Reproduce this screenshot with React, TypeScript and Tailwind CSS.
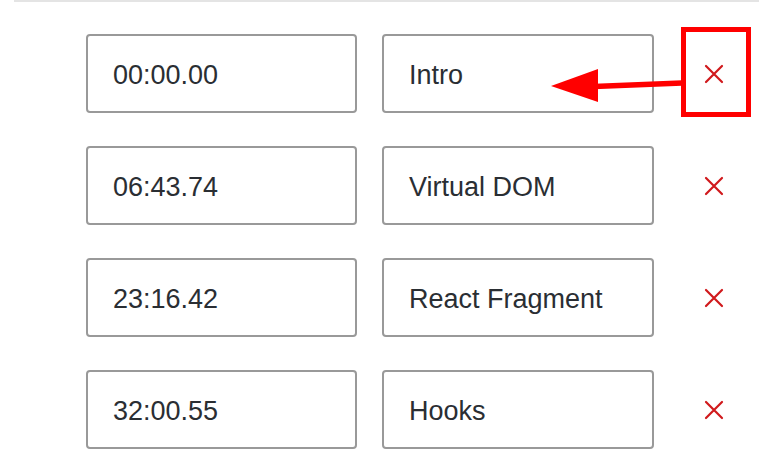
import React from "react";

const rows = [
  { time: "00:00.00", title: "Intro" },
  { time: "06:43.74", title: "Virtual DOM" },
  { time: "23:16.42", title: "React Fragment" },
  { time: "32:00.55", title: "Hooks" },
];

function XIcon() {
  return (
    <svg width="20" height="20" viewBox="0 0 20 20">
      <path d="M2 2 L18 18 M18 2 L2 18" stroke="#d0191c" strokeWidth="2.2" strokeLinecap="round" />
    </svg>
  );
}

export default function App() {
  return (
    <div
      className="relative w-[774px] h-[466px] bg-white overflow-hidden"
      style={{ fontFamily: '"Liberation Sans", Arial, sans-serif' }}
    >
      <div className="mx-[14px] h-[2px] bg-[#e4e4e4] w-[745px]" />
      <div className="flex flex-col gap-[33px] pt-[32px] pl-[86px]">
        {rows.map((r) => (
          <div key={r.time} className="flex items-center">
            <div className="w-[271px] h-[79px] border-2 border-[#999999] rounded-[4px] flex items-center pl-[25px] pt-[3px] text-[27px] text-[#2a2e33]">
              {r.time}
            </div>
            <div className="ml-[25px] w-[272px] h-[79px] border-2 border-[#999999] rounded-[4px] flex items-center pl-[25px] pt-[3px] text-[27px] text-[#2a2e33]">
              {r.title}
            </div>
            <div className="ml-[30px] w-[60px] h-[79px] flex items-center justify-center">
              <XIcon />
            </div>
          </div>
        ))}
      </div>
      {/* annotation box */}
      <div className="absolute left-[681px] top-[27px] w-[70px] h-[90px] border-[5px] border-[#ff0000]" />
      {/* annotation arrow */}
      <svg className="absolute left-0 top-0" width="774" height="466" viewBox="0 0 774 466">
        <line x1="682" y1="83" x2="594" y2="86.5" stroke="#ff0000" strokeWidth="5.5" />
        <polygon points="551,86 598,69 598,102" fill="#ff0000" />
      </svg>
    </div>
  );
}
